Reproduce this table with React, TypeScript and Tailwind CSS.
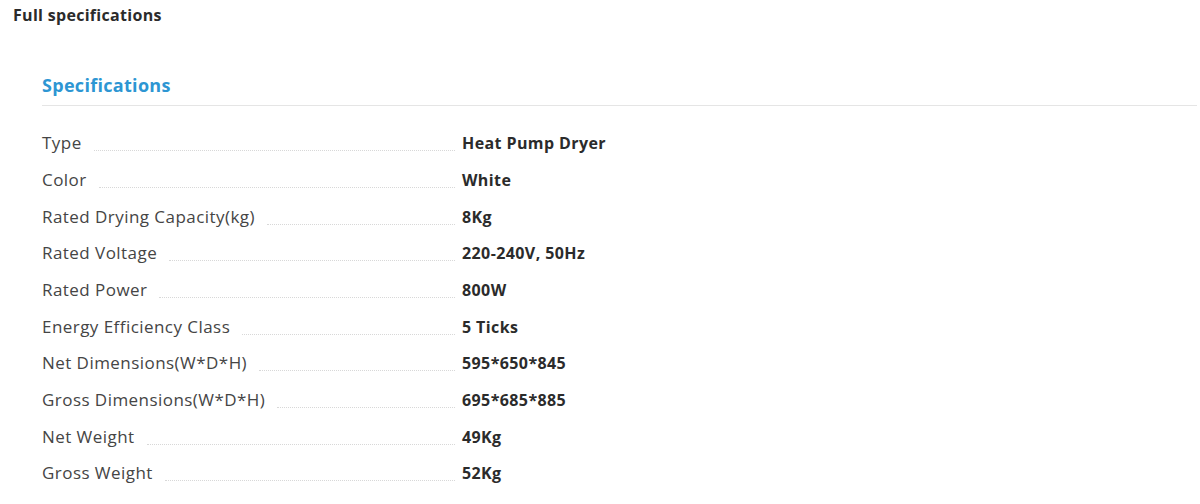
import React from "react";

const rows: [string, string][] = [
  ["Type", "Heat Pump Dryer"],
  ["Color", "White"],
  ["Rated Drying Capacity(kg)", "8Kg"],
  ["Rated Voltage", "220-240V, 50Hz"],
  ["Rated Power", "800W"],
  ["Energy Efficiency Class", "5 Ticks"],
  ["Net Dimensions(W*D*H)", "595*650*845"],
  ["Gross Dimensions(W*D*H)", "695*685*885"],
  ["Net Weight", "49Kg"],
  ["Gross Weight", "52Kg"],
];

export default function App() {
  return (
    <div className="w-[1200px] h-[504px] bg-white overflow-hidden text-[#333]" style={{ fontFamily: '"Open Sans", "Liberation Sans", sans-serif' }}>
      <div className="pl-[13px] pt-[4px] text-[16px] font-bold leading-[22px] tracking-[0.3px] text-[#2b2b2b]">Full specifications</div>
      <div className="pl-[42px] pr-[3px] pt-[47px]">
        <div className="text-[18px] font-bold text-[#2d96d3] leading-[24px] tracking-[0.3px] pb-[8px] border-b border-[#e5e5e5]">Specifications</div>
        <div className="pt-[19px]">
          {rows.map(([k, v]) => (
            <div key={k} className="flex items-center h-[36.67px]">
              <div className="w-[413px] flex items-end">
                <span className="text-[17px] leading-[22px] tracking-[0.45px] text-[#454545] whitespace-nowrap">{k}</span>
                <span className="flex-1 ml-[12px] mb-[3px] border-b border-dotted border-[#d8d8d8]"></span>
              </div>
              <div className="ml-[7px] text-[16px] font-bold leading-[22px] tracking-[0.4px] text-[#2b2b2b]">{v}</div>
            </div>
          ))}
        </div>
      </div>
    </div>
  );
}
